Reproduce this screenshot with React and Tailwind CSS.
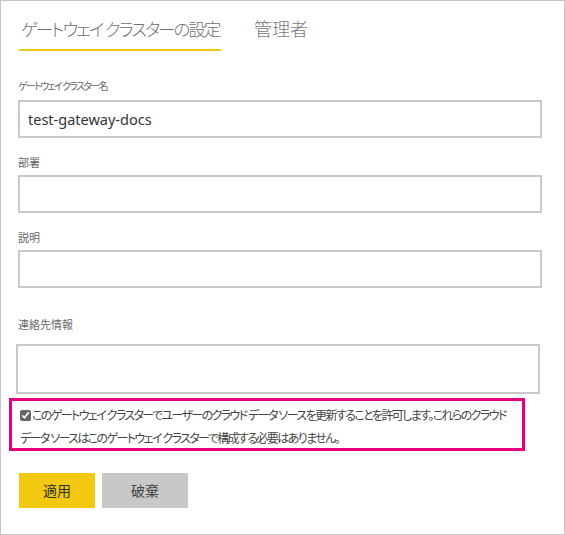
import React, { useState } from "react";

const font = "font-['Noto_Sans','Noto_Sans_CJK_JP',sans-serif] [font-feature-settings:'palt']";

const Field = ({ label, value, className, labelClass = "text-[11px] tracking-[0px]" }) => (
  <div className="flex flex-col">
    <label className={`leading-[14px] text-[#666] ${labelClass}`}>{label}</label>
    <input
      type="text"
      defaultValue={value}
      className={`border-2 border-[#c8c8c8] px-[8px] text-[14.5px] text-[#333] outline-none ${className}`}
    />
  </div>
);

const GatewaySettings = () => {
  const [allowCloud, setAllowCloud] = useState(true);

  return (
    <div className={`w-[565px] h-[535px] border border-[#c6c6c6] bg-white ${font}`}>
      <div className="flex pl-[18px] pt-[14px]">
        <div className="w-[202px] min-w-0 shrink-0 border-b-2 border-[#f2c811] pb-[6px] pl-[2px] text-[17.5px] font-light leading-[28px] text-[#6f6f6f] tracking-[-2px] whitespace-nowrap">
          ゲートウェイ クラスターの設定
        </div>
        <div className="ml-[33px] text-[18px] font-light leading-[28px] text-[#7a7a7a]">管理者</div>
      </div>

      <div className="px-[17px] pt-[28px]">
        <Field
          label="ゲートウェイ クラスター名"
          labelClass="text-[10px] tracking-[-1.7px]"
          value="test-gateway-docs"
          className="mt-[7px] w-[524px] h-[38px]"
        />
        <div className="mt-[18px]">
          <Field label="部署" className="mt-[5px] w-[524px] h-[38px]" />
        </div>
        <div className="mt-[18px]">
          <Field label="説明" className="mt-[5px] w-[524px] h-[38px]" />
        </div>
        <div className="mt-[30px]">
          <Field label="連絡先情報" className="mt-[12px] -ml-[2px] w-[524px] h-[50px]" />
        </div>
      </div>

      <div className="mx-[8px] mt-[4px] w-[516px] h-[53px] border-[3px] border-[#e6007e] pl-[8px] pt-[3px] text-[12px] leading-[23px] text-[#444] tracking-[-1.6px]">
        <label className="flex">
          <input
            type="checkbox"
            checked={allowCloud}
            onChange={(e) => setAllowCloud(e.target.checked)}
            className="mt-[6px] mr-[1px] h-[11px] w-[11px] accent-[#666]"
          />
          <span className="whitespace-nowrap">このゲートウェイ クラスターでユーザーのクラウド データ ソースを更新することを許可します。これらのクラウド</span>
        </label>
        <div className="whitespace-nowrap">データ ソースはこのゲートウェイ クラスターで構成する必要はありません。</div>
      </div>

      <div className="flex gap-[7px] pl-[18px] pt-[22px]">
        <button className="w-[76px] h-[35px] bg-[#f2c811] text-[14px] text-[#333]">適用</button>
        <button className="w-[86px] h-[35px] bg-[#c8c8c8] text-[14px] text-[#444]">破棄</button>
      </div>
    </div>
  );
};

export default GatewaySettings;
